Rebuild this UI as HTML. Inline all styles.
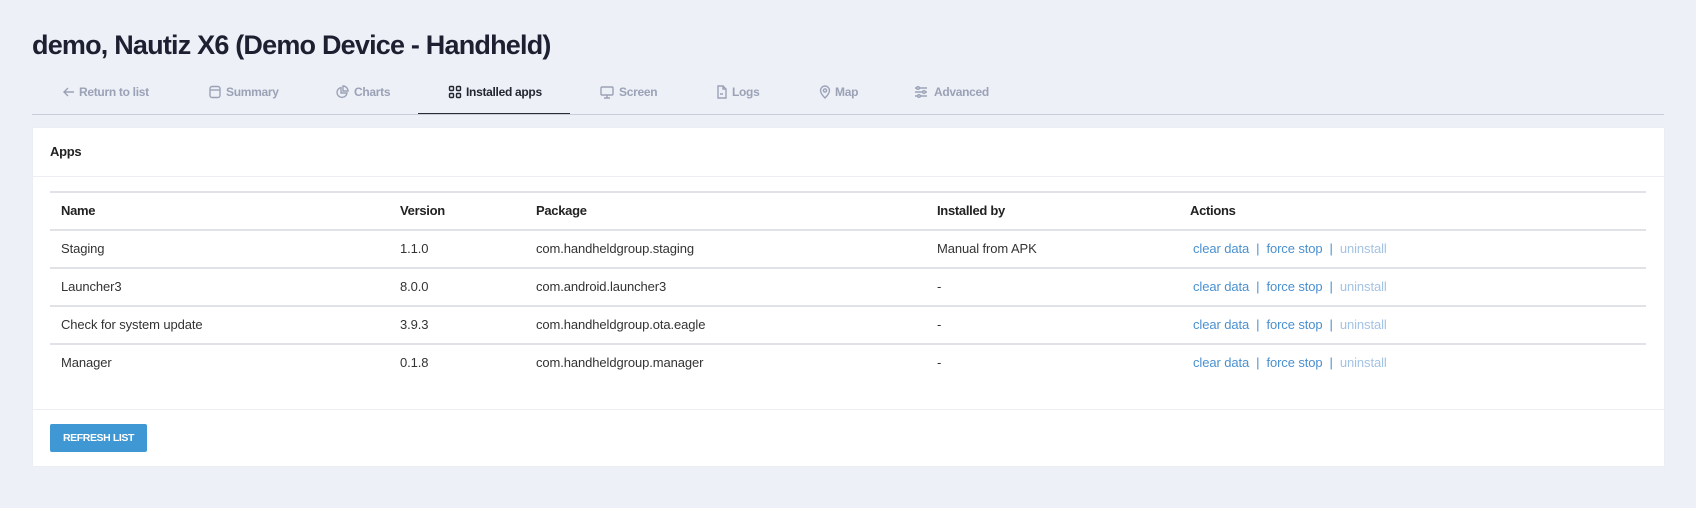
<!DOCTYPE html>
<html><head><meta charset="utf-8"><style>
*{margin:0;padding:0;box-sizing:border-box}
body{width:1696px;height:508px;background:#edf0f7;font-family:"Liberation Sans",Arial,sans-serif;color:#222;position:relative;overflow:hidden}
h1{position:absolute;left:32px;top:30px;font-size:27px;font-weight:bold;color:#1d2030;letter-spacing:-0.8px}
.tabline{position:absolute;left:32px;top:114px;width:1632px;height:1px;background:#c9cdda}
.tab{position:absolute;top:84px;font-size:12px;letter-spacing:-0.3px;font-weight:bold;color:#9ba2b6;white-space:nowrap;height:16px;line-height:16px}
.tab svg{position:absolute;top:1px;width:14px;height:14px;fill:none;stroke:currentColor;stroke-width:1.4}
.act{color:#23262f}
.under{position:absolute;left:418px;top:113px;width:152px;height:2px;background:#2a2d35}
.card{position:absolute;left:33px;top:128px;width:1631px;height:338px;background:#fff;box-shadow:0 0 1px #dde1ea}
.apps{position:absolute;left:17px;top:16px;font-size:13px;font-weight:bold;color:#222;letter-spacing:-0.3px}
.hl{position:absolute;left:0;width:1631px;height:1px;background:#eceef3}
.rl{position:absolute;left:17px;width:1596px;height:1px;background:#e0e2e8}
.c{position:absolute;font-size:13px;color:#333;white-space:nowrap;letter-spacing:-0.1px}
.b{font-weight:bold;color:#222;letter-spacing:-0.3px}
.lk{color:#4a90cf}.un{color:#a3c3e4}
.btn{position:absolute;left:17px;top:296px;width:97px;height:28px;background:#3f97d4;border-radius:2px;color:#fff;font-size:10.5px;font-weight:bold;text-align:center;line-height:28px;letter-spacing:-0.4px}
</style></head><body>
<h1>demo, Nautiz X6 (Demo Device - Handheld)</h1>
<div class="tab" style="left:62px"><svg viewBox="0 0 14 14" style="left:0"><path d="M12 7H2M6 3L2 7l4 4"/></svg><span style="margin-left:17px">Return to list</span></div>
<div class="tab" style="left:208px"><svg viewBox="0 0 14 14" style="left:0"><rect x="2" y="1.5" width="10" height="11" rx="2"/><path d="M2 5h10"/></svg><span style="margin-left:18px">Summary</span></div>
<div class="tab" style="left:335px"><svg viewBox="0 0 14 14" style="left:0"><path d="M6 2.5A5 5 0 1 0 12 8H6z"/><path d="M8 1v5h5A5 5 0 0 0 8 1z"/></svg><span style="margin-left:19px">Charts</span></div>
<div class="tab act" style="left:448px"><svg viewBox="0 0 14 14" style="left:0"><rect x="1.5" y="1.5" width="4" height="4" rx="1"/><rect x="8.5" y="1.5" width="4" height="4" rx="1"/><rect x="1.5" y="8.5" width="4" height="4" rx="1"/><rect x="8.5" y="8.5" width="4" height="4" rx="1"/></svg><span style="margin-left:18px">Installed apps</span></div>
<div class="under"></div>
<div class="tab" style="left:600px"><svg viewBox="0 0 14 14" style="left:0"><rect x="1" y="2" width="12" height="8" rx="1"/><path d="M7 10v3M4 13h6"/></svg><span style="margin-left:19px">Screen</span></div>
<div class="tab" style="left:715px"><svg viewBox="0 0 14 14" style="left:0"><path d="M3 1h5l3 3v9H3z"/><path d="M8 1v3h3M5 9h3"/></svg><span style="margin-left:17px">Logs</span></div>
<div class="tab" style="left:818px"><svg viewBox="0 0 14 14" style="left:0"><path d="M7 13s-4.5-4.5-4.5-7.5a4.5 4.5 0 0 1 9 0C11.5 8.5 7 13 7 13z"/><circle cx="7" cy="5.5" r="1.6"/></svg><span style="margin-left:17px">Map</span></div>
<div class="tab" style="left:914px"><svg viewBox="0 0 14 14" style="left:0"><path d="M1 3h12M1 7h12M1 11h12"/><circle cx="4" cy="3" r="1.3" fill="#edf0f7"/><circle cx="10" cy="7" r="1.3" fill="#edf0f7"/><circle cx="5" cy="11" r="1.3" fill="#edf0f7"/></svg><span style="margin-left:20px">Advanced</span></div>
<div class="tabline"></div>
<div class="card">
<div class="apps">Apps</div>
<div class="hl" style="top:48px"></div>
<div class="rl" style="top:63px;height:2px"></div>
<div class="c b" style="left:28px;top:75px">Name</div>
<div class="c b" style="left:367px;top:75px">Version</div>
<div class="c b" style="left:503px;top:75px">Package</div>
<div class="c b" style="left:904px;top:75px">Installed by</div>
<div class="c b" style="left:1157px;top:75px">Actions</div>
<div class="rl" style="top:101px;height:2px"></div>
<div class="c" style="left:28px;top:113px">Staging</div><div class="c" style="left:367px;top:113px">1.1.0</div><div class="c" style="left:503px;top:113px">com.handheldgroup.staging</div><div class="c" style="left:904px;top:113px">Manual from APK</div>
<div class="c" style="left:1160px;top:113px"><span class="lk">clear data</span> <span class="lk">&nbsp;|&nbsp;</span> <span class="lk">force stop</span> <span class="lk">&nbsp;|&nbsp;</span> <span class="un">uninstall</span></div>
<div class="rl" style="top:139px;height:2px"></div>
<div class="c" style="left:28px;top:151px">Launcher3</div><div class="c" style="left:367px;top:151px">8.0.0</div><div class="c" style="left:503px;top:151px">com.android.launcher3</div><div class="c" style="left:904px;top:151px">-</div>
<div class="c" style="left:1160px;top:151px"><span class="lk">clear data</span> <span class="lk">&nbsp;|&nbsp;</span> <span class="lk">force stop</span> <span class="lk">&nbsp;|&nbsp;</span> <span class="un">uninstall</span></div>
<div class="rl" style="top:177px;height:2px"></div>
<div class="c" style="left:28px;top:189px">Check for system update</div><div class="c" style="left:367px;top:189px">3.9.3</div><div class="c" style="left:503px;top:189px">com.handheldgroup.ota.eagle</div><div class="c" style="left:904px;top:189px">-</div>
<div class="c" style="left:1160px;top:189px"><span class="lk">clear data</span> <span class="lk">&nbsp;|&nbsp;</span> <span class="lk">force stop</span> <span class="lk">&nbsp;|&nbsp;</span> <span class="un">uninstall</span></div>
<div class="rl" style="top:215px;height:2px"></div>
<div class="c" style="left:28px;top:227px">Manager</div><div class="c" style="left:367px;top:227px">0.1.8</div><div class="c" style="left:503px;top:227px">com.handheldgroup.manager</div><div class="c" style="left:904px;top:227px">-</div>
<div class="c" style="left:1160px;top:227px"><span class="lk">clear data</span> <span class="lk">&nbsp;|&nbsp;</span> <span class="lk">force stop</span> <span class="lk">&nbsp;|&nbsp;</span> <span class="un">uninstall</span></div>
<div class="hl" style="top:281px"></div>
<div class="btn">REFRESH LIST</div>
</div>
</body></html>
